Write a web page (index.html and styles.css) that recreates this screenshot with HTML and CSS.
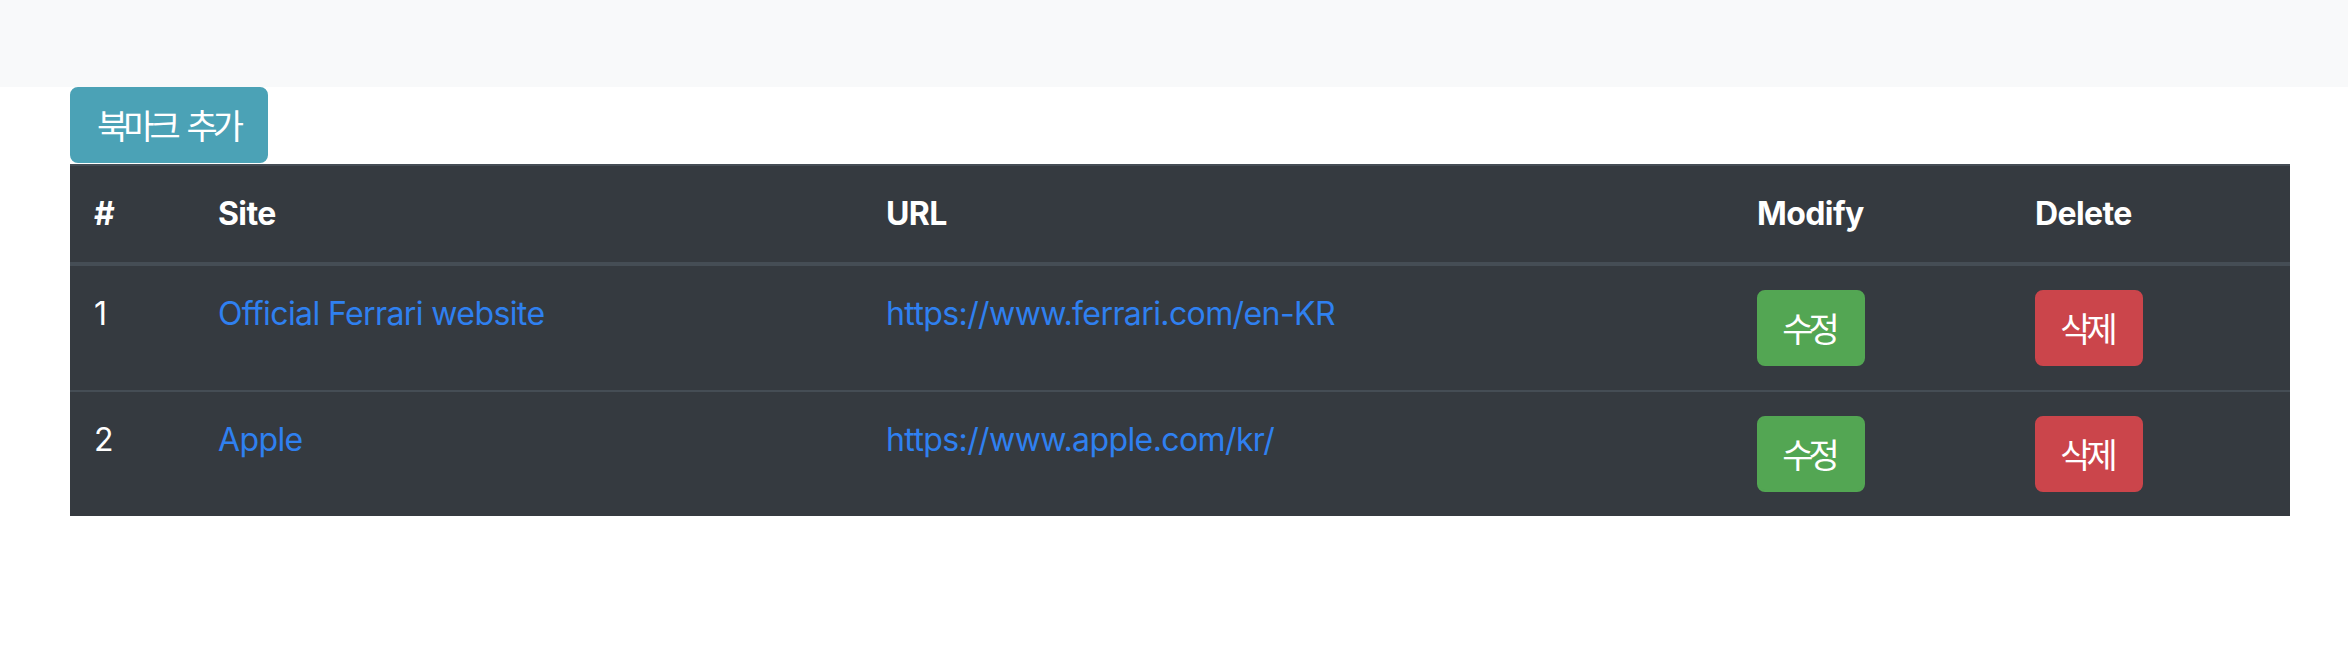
FILE: index.html
```html
<!DOCTYPE html>
<html lang="ko">
<head>
<meta charset="utf-8">
<title>Bookmarks</title>
<link rel="stylesheet" href="styles.css">
</head>
<body>
<header class="topbar"></header>
<main class="content">
  <button class="btn btn-info btn-add">북마크 추가</button>
  <table class="bm-table">
    <thead>
      <tr>
        <th class="c-num">#</th>
        <th class="c-site">Site</th>
        <th class="c-url">URL</th>
        <th class="c-mod">Modify</th>
        <th class="c-del">Delete</th>
      </tr>
    </thead>
    <tbody>
      <tr>
        <td>1</td>
        <td><a href="#">Official Ferrari website</a></td>
        <td><a href="#">https://www.ferrari.com/en-KR</a></td>
        <td><button class="btn btn-success btn-row">수정</button></td>
        <td><button class="btn btn-danger btn-row">삭제</button></td>
      </tr>
      <tr>
        <td>2</td>
        <td><a href="#">Apple</a></td>
        <td><a href="#">https://www.apple.com/kr/</a></td>
        <td><button class="btn btn-success btn-row">수정</button></td>
        <td><button class="btn btn-danger btn-row">삭제</button></td>
      </tr>
    </tbody>
  </table>
</main>
</body>
</html>
```

FILE: styles.css
```css
html, body {
  margin: 0;
  padding: 0;
  background: #ffffff;
}

body {
  font-family: Inter, "Noto Sans CJK KR", sans-serif;
  font-size: 32px;
  line-height: 48px;
  letter-spacing: -0.6px;
  color: #ffffff;
}

.topbar {
  height: 87px;
  background: #f8f9fa;
}

.content {
  padding: 0 58px 0 70px;
  display: flex;
  flex-direction: column;
  align-items: flex-start;
}

.btn {
  font-family: "Noto Sans CJK KR", Inter, sans-serif;
  font-size: 34px;
  line-height: 48px;
  letter-spacing: -5px;
  height: 76px;
  padding: 0 5px 0 0;
  text-align: center;
  border: 2px solid transparent;
  border-radius: 8px;
  color: #ffffff;
  cursor: pointer;
  box-sizing: border-box;
}

.btn-info {
  background: #4ba2b6;
  border-color: #4ba2b6;
}

.btn-success {
  background: #53a653;
  border-color: #53a653;
}

.btn-danger {
  background: #cb454b;
  border-color: #cb454b;
}

.btn-add {
  width: 198px;
  word-spacing: 6px;
  padding: 0 2px 0 0;
}

.btn-row {
  width: 108px;
}

.bm-table {
  margin-top: 1px;
  width: 2220px;
  border-collapse: collapse;
  background: #353a40;
  table-layout: fixed;
}

.bm-table th,
.bm-table td {
  box-sizing: border-box;
  text-align: left;
  vertical-align: top;
  padding: 24px;
  border-top: 2px solid #454d55;
}

.bm-table th {
  font-weight: 700;
  border-bottom: 4px solid #454d55;
}

.bm-table td {
  font-weight: 400;
  white-space: nowrap;
}

.c-num { width: 124px; }
.c-site { width: 668px; }
.c-url { width: 871px; }
.c-mod { width: 278px; }
.c-del { width: 279px; }

.bm-table a {
  color: #2f80f0;
  text-decoration: none;
}
```
